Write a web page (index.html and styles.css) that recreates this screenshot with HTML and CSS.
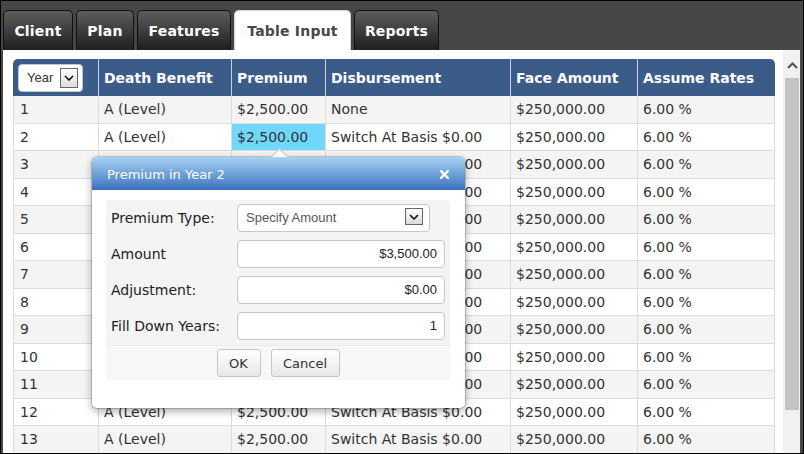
FILE: index.html
```html
<!DOCTYPE html>
<html lang="en">
<head>
<meta charset="utf-8">
<title>Table Input</title>
<link rel="stylesheet" href="styles.css">
</head>
<body>
<div class="app">
  <nav class="tabs">
    <div class="tab t-client">Client</div>
    <div class="tab t-plan">Plan</div>
    <div class="tab t-features">Features</div>
    <div class="tab t-table active">Table Input</div>
    <div class="tab t-reports">Reports</div>
  </nav>
  <main class="content">
    <div class="grid-wrap">
      <table class="grid">
        <thead>
          <tr class="head-row">
            <th class="c-year">
              <div class="year-select">Year
                <span class="chev-box"><svg width="10" height="6" viewBox="0 0 10 6"><path d="M1 1 L5 5 L9 1" fill="none" stroke="#111" stroke-width="1.6"/></svg></span>
              </div>
            </th>
            <th>Death Benefit</th>
            <th>Premium</th>
            <th>Disbursement</th>
            <th>Face Amount</th>
            <th>Assume Rates</th>
          </tr>
        </thead>
        <tbody>
          <tr><td>1</td><td>A (Level)</td><td>$2,500.00</td><td>None</td><td>$250,000.00</td><td>6.00 %</td></tr>
          <tr><td>2</td><td>A (Level)</td><td class="sel">$2,500.00</td><td>Switch At Basis $0.00</td><td>$250,000.00</td><td>6.00 %</td></tr>
          <tr><td>3</td><td>A (Level)</td><td>$2,500.00</td><td>Switch At Basis $0.00</td><td>$250,000.00</td><td>6.00 %</td></tr>
          <tr><td>4</td><td>A (Level)</td><td>$2,500.00</td><td>Switch At Basis $0.00</td><td>$250,000.00</td><td>6.00 %</td></tr>
          <tr><td>5</td><td>A (Level)</td><td>$2,500.00</td><td>Switch At Basis $0.00</td><td>$250,000.00</td><td>6.00 %</td></tr>
          <tr><td>6</td><td>A (Level)</td><td>$2,500.00</td><td>Switch At Basis $0.00</td><td>$250,000.00</td><td>6.00 %</td></tr>
          <tr><td>7</td><td>A (Level)</td><td>$2,500.00</td><td>Switch At Basis $0.00</td><td>$250,000.00</td><td>6.00 %</td></tr>
          <tr><td>8</td><td>A (Level)</td><td>$2,500.00</td><td>Switch At Basis $0.00</td><td>$250,000.00</td><td>6.00 %</td></tr>
          <tr><td>9</td><td>A (Level)</td><td>$2,500.00</td><td>Switch At Basis $0.00</td><td>$250,000.00</td><td>6.00 %</td></tr>
          <tr><td>10</td><td>A (Level)</td><td>$2,500.00</td><td>Switch At Basis $0.00</td><td>$250,000.00</td><td>6.00 %</td></tr>
          <tr><td>11</td><td>A (Level)</td><td>$2,500.00</td><td>Switch At Basis $0.00</td><td>$250,000.00</td><td>6.00 %</td></tr>
          <tr><td>12</td><td>A (Level)</td><td>$2,500.00</td><td>Switch At Basis $0.00</td><td>$250,000.00</td><td>6.00 %</td></tr>
          <tr><td>13</td><td>A (Level)</td><td>$2,500.00</td><td>Switch At Basis $0.00</td><td>$250,000.00</td><td>6.00 %</td></tr>
        </tbody>
      </table>
    </div>
    <div class="scrollbar">
      <div class="sb-arrow"><svg width="11" height="7" viewBox="0 0 11 7"><path d="M1 6 L5.5 1.5 L10 6" fill="none" stroke="#505050" stroke-width="2"/></svg></div>
      <div class="sb-thumb"></div>
    </div>

    <div class="popup">
      <div class="popup-head">
        <span class="popup-title">Premium in Year 2</span>
        <svg class="popup-close" width="9" height="9" viewBox="0 0 9 9"><path d="M1 1 L8 8 M8 1 L1 8" stroke="#fff" stroke-width="2.3" stroke-linecap="square"/></svg>
      </div>
      <div class="popup-body">
        <div class="panel">
          <div class="fields">
            <label class="f-label">Premium Type:</label>
            <div class="f-input f-select"><span>Specify Amount</span>
              <span class="chev-box small"><svg width="10" height="6" viewBox="0 0 10 6"><path d="M1 1 L5 5 L9 1" fill="none" stroke="#111" stroke-width="1.6"/></svg></span>
            </div>
            <label class="f-label">Amount</label>
            <div class="f-input">$3,500.00</div>
            <label class="f-label">Adjustment:</label>
            <div class="f-input">$0.00</div>
            <label class="f-label">Fill Down Years:</label>
            <div class="f-input">1</div>
          </div>
          <div class="panel-foot">
            <button class="btn btn-ok">OK</button>
            <button class="btn btn-cancel">Cancel</button>
          </div>
        </div>
      </div>
    </div>
  </main>
</div>
</body>
</html>
```

FILE: styles.css
```css
* { box-sizing: border-box; }

html, body {
  margin: 0;
  padding: 0;
  background: #000;
}

.app {
  width: 804px;
  height: 454px;
  border: 1px solid #000;
  background: #474747;
  padding: 9px 3px 0 2px;
  display: flex;
  flex-direction: column;
  font-family: "DejaVu Sans", Verdana, sans-serif;
}

/* Tabs */
.tabs {
  display: flex;
  gap: 3px;
  height: 40px;
  flex: none;
}

.tab {
  height: 40px;
  padding: 1px 0 0;
  line-height: 38px;
  text-align: center;
  border: 1px solid #111;
  border-bottom: 0;
  border-radius: 5px 5px 0 0;
  background: linear-gradient(#5c5c5c, #1f1f1f);
  color: #fff;
  font-weight: bold;
  font-size: 14px;
  letter-spacing: 0.2px;
  white-space: nowrap;
}

.t-client { width: 70px; }
.t-plan { width: 58px; }
.t-features { width: 94px; }
.t-table { width: 117px; }
.t-reports { width: 85px; }

.tab.active {
  background: #fff;
  border-color: #d4d4d4;
  color: #474747;
}

/* Content */
.content {
  flex: 1;
  background: #fff;
  display: flex;
  position: relative;
  overflow: hidden;
}

.grid-wrap {
  flex: 1;
  padding: 9px 8px 0 10px;
  overflow: hidden;
}

.grid {
  display: block;
  width: 762px;
  border-spacing: 0;
  font-size: 14px;
  color: #333;
}

.grid thead,
.grid tbody {
  display: block;
}

.grid tr {
  display: grid;
  grid-template-columns: 85px 133px 94px 185px 127px 138px;
}

.head-row {
  height: 37px;
  background: #3b5b88;
  border-radius: 5px 5px 0 0;
}

.grid th {
  display: flex;
  align-items: center;
  padding: 0 5px;
  color: #fff;
  font-weight: bold;
  font-size: 14px;
  text-align: left;
  border-left: 1px solid #c9d2de;
  white-space: nowrap;
}

.grid th:first-child {
  border-left: 0;
}

.grid td {
  display: flex;
  align-items: center;
  padding: 0 5px;
  border-left: 1px solid #dcdcdc;
  border-bottom: 1px solid #dcdcdc;
  white-space: nowrap;
  overflow: hidden;
}

.grid tbody tr {
  height: 27.5px;
}

.grid tbody tr:nth-child(odd) {
  background: #f4f4f4;
}

.grid tbody tr:nth-child(even) {
  background: #fff;
}

.grid td:first-child {
  padding-left: 6px;
}

.grid td:last-child {
  border-right: 1px solid #dcdcdc;
}

.grid td.sel {
  background: #70d8fd;
}

/* Year select */
.year-select {
  width: 65px;
  height: 28px;
  background: #fff;
  border: 1px solid #c4c4c4;
  border-radius: 4px;
  display: flex;
  align-items: center;
  justify-content: space-between;
  padding: 0 4px 0 8px;
  font-family: "Liberation Sans", Arial, sans-serif;
  font-weight: normal;
  font-size: 13px;
  color: #333;
}

.chev-box {
  width: 18px;
  height: 20px;
  border: 1px solid #666;
  background: linear-gradient(#fdfdfd, #dcdcdc);
  display: flex;
  align-items: center;
  justify-content: center;
}

.chev-box.small {
  height: 17px;
  margin-top: 3px;
}

/* Scrollbar */
.scrollbar {
  width: 17px;
  flex: none;
  background: #f1f1f1;
}

.sb-arrow {
  height: 28px;
  display: flex;
  justify-content: center;
  padding-top: 12px;
  padding-left: 2px;
}

.sb-thumb {
  margin-left: 2px;
  width: 14px;
  height: 332px;
  background: #c3c3c3;
}

/* Popup */
.popup {
  position: absolute;
  left: 89px;
  top: 107px;
  width: 373px;
  height: 251px;
  background: #fff;
  border-radius: 5px;
  box-shadow: 0 0 0 1px rgba(0, 0, 0, 0.16), 0 3px 8px rgba(0, 0, 0, 0.35);
  z-index: 10;
}

.popup::before {
  content: "";
  position: absolute;
  left: 179.5px;
  top: -6.5px;
  width: 13px;
  height: 13px;
  background: #fff;
  border: 1px solid #bdbdbd;
  transform: rotate(45deg);
  z-index: 0;
}

.popup-head {
  position: relative;
  z-index: 1;
  height: 33px;
  border-radius: 5px 5px 0 0;
  background: linear-gradient(#a9d2f3, #3a72bc);
  display: flex;
  align-items: center;
  justify-content: space-between;
  padding: 2px 16px 0 15px;
  color: #fff;
  font-size: 13px;
}

.popup-body {
  padding: 10px 15px 0 14px;
}

.panel {
  height: 180px;
  background: #f4f4f4;
  border-radius: 3px;
}

.fields {
  display: grid;
  grid-template-columns: 126px 208px;
  grid-auto-rows: 28px;
  row-gap: 8px;
  align-items: center;
  padding: 4px 5px 0;
}

.f-label {
  font-size: 14px;
  color: #222;
}

.f-input {
  height: 28px;
  border: 1px solid #c8c8c8;
  border-radius: 4px;
  background: #fff;
  font-family: "Liberation Sans", Arial, sans-serif;
  font-size: 13px;
  color: #222;
  text-align: right;
  line-height: 26px;
  padding: 0 7px;
}

.f-select {
  width: 193px;
  display: flex;
  justify-content: space-between;
  align-items: flex-start;
  text-align: left;
  padding: 0 6px 0 8px;
  color: #555;
}

.panel-foot {
  margin-top: 5px;
  height: 35px;
  border-top: 1px solid #ececec;
  background: #f7f7f7;
  border-radius: 0 0 3px 3px;
  display: flex;
  justify-content: center;
  gap: 10px;
  padding-top: 3px;
}

.btn {
  height: 28px;
  border: 1px solid #c6c6c6;
  border-radius: 3px;
  background: linear-gradient(#ffffff, #e8e8e8);
  font-family: "DejaVu Sans", Verdana, sans-serif;
  font-size: 13px;
  color: #333;
  padding: 0;
}

.btn-ok { width: 44px; }
.btn-cancel { width: 69px; }
```
